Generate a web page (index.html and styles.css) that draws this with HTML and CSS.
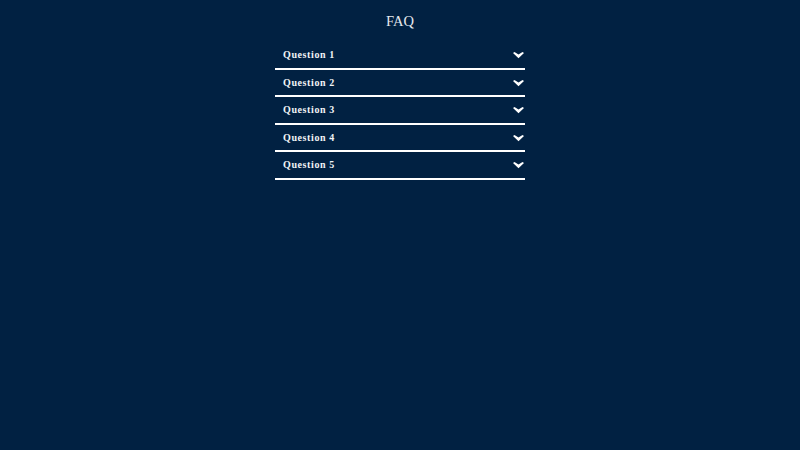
FILE: index.html
```html
<!DOCTYPE html>
<html lang="en">
<head>
<meta charset="utf-8">
<title>FAQ</title>
<link rel="stylesheet" href="styles.css">
</head>
<body>
<main class="faq">
  <h1 class="faq-title">FAQ</h1>
  <div class="faq-list">
    <div class="faq-item"><span class="faq-q">Question 1</span><svg class="chev" viewBox="0 0 11 7"><path d="M0 1 L1.5 0 L5.5 2.6 L9.5 0 L11 1 L5.5 6.2 Z"/></svg></div>
    <div class="faq-item"><span class="faq-q">Question 2</span><svg class="chev" viewBox="0 0 11 7"><path d="M0 1 L1.5 0 L5.5 2.6 L9.5 0 L11 1 L5.5 6.2 Z"/></svg></div>
    <div class="faq-item"><span class="faq-q">Question 3</span><svg class="chev" viewBox="0 0 11 7"><path d="M0 1 L1.5 0 L5.5 2.6 L9.5 0 L11 1 L5.5 6.2 Z"/></svg></div>
    <div class="faq-item"><span class="faq-q">Question 4</span><svg class="chev" viewBox="0 0 11 7"><path d="M0 1 L1.5 0 L5.5 2.6 L9.5 0 L11 1 L5.5 6.2 Z"/></svg></div>
    <div class="faq-item"><span class="faq-q">Question 5</span><svg class="chev" viewBox="0 0 11 7"><path d="M0 1 L1.5 0 L5.5 2.6 L9.5 0 L11 1 L5.5 6.2 Z"/></svg></div>
  </div>
</main>
</body>
</html>
```
FILE: styles.css
```css
html, body {
  margin: 0;
  padding: 0;
  background: #012142;
  font-family: "Liberation Serif", "Times New Roman", serif;
  color: #ffffff;
}

.faq {
  width: 250px;
  margin: 0 auto;
  padding-top: 11px;
}

.faq-title {
  margin: 0 0 11px;
  font-size: 14.5px;
  font-weight: normal;
  line-height: 20px;
  text-align: center;
  color: #e6e9ee;
}

.faq-item {
  display: flex;
  align-items: center;
  justify-content: space-between;
  height: 25.5px;
  padding: 0 1px 0 8px;
  border-bottom: 2px solid #ffffff;
}

.faq-q {
  font-size: 10px;
  font-weight: bold;
  letter-spacing: 0.6px;
  color: #f2f4f7;
}

.chev {
  width: 11px;
  height: 7px;
  margin-top: 2px;
  fill: #ffffff;
}
```
